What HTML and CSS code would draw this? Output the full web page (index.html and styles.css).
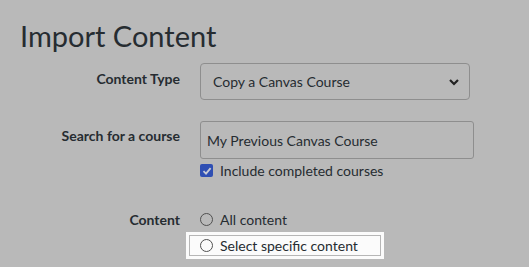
FILE: index.html
```html
<!DOCTYPE html>
<html>
<head>
<meta charset="utf-8">
<link rel="stylesheet" href="styles.css">
</head>
<body>
<div class="page">
  <h1 class="title">Import Content</h1>
  <div class="row row-type">
    <div class="label">Content Type</div>
    <div class="field">
      <div class="select">
        <span>Copy a Canvas Course</span>
        <svg class="chev" width="12" height="8" viewBox="0 0 12 8"><path d="M2 2 L6 6 L10 2" fill="none" stroke="#222" stroke-width="2.2"/></svg>
      </div>
    </div>
  </div>
  <div class="row row-search">
    <div class="label">Search for a course</div>
    <div class="field">
      <div class="input">My Previous Canvas Course</div>
      <div class="check-line">
        <span class="checkbox"><svg width="12" height="12" viewBox="0 0 12 12"><path d="M2.5 6.2 L5 8.6 L9.6 3.2" fill="none" stroke="#c8cbd6" stroke-width="1.8"/></svg></span>
        <span>Include completed courses</span>
      </div>
    </div>
  </div>
  <div class="row row-content">
    <div class="label">Content</div>
    <div class="field">
      <div class="radio-line"><span class="radio"></span><span>All content</span></div>
      <div class="highlight">
        <div class="highlight-inner"><span class="radio"></span><span>Select specific content</span></div>
      </div>
    </div>
  </div>
</div>
</body>
</html>
```
FILE: styles.css
```css
html, body {
  margin: 0;
  padding: 0;
  background: #b9b9b9;
  font-family: Lato, "Open Sans", sans-serif;
  color: #262c31;
}
.page {
  width: 529px;
  height: 267px;
  overflow: hidden;
}
.title {
  margin: 0;
  padding: 17px 0 0 20px;
  font-size: 29px;
  font-weight: 400;
  line-height: 38px;
  height: 46px;
}
.row {
  display: flex;
  gap: 20px;
}
.label {
  width: 180px;
  text-align: right;
  font-weight: 700;
  font-size: 14px;
  flex-shrink: 0;
}
.row-type .label { padding-top: 7px; }
.select {
  height: 35px;
  border: 1px solid #8e8e8e;
  border-radius: 4px;
  display: flex;
  align-items: center;
  justify-content: space-between;
  padding: 0 9px 0 12px;
  width: 247px;
  font-size: 14px;
}
.chev { margin-top: 1px; }
.row-search { margin-top: 21px; }
.row-search .label { padding-top: 6px; }
.input {
  width: 266px;
  height: 36px;
  border: 1px solid #8e8e8e;
  border-radius: 3px;
  padding-left: 6px;
  display: flex;
  align-items: center;
  font-size: 14px;
}
.check-line {
  display: flex;
  align-items: center;
  gap: 7px;
  margin-top: 4px;
  font-size: 14px;
  height: 15px;
}
.checkbox {
  width: 13px;
  height: 13px;
  background: #2f4fb3;
  border-radius: 2px;
  display: flex;
  align-items: center;
  justify-content: center;
}
.row-content { margin-top: 33px; }
.row-content .label { line-height: 17px; }
.radio-line {
  display: flex;
  align-items: center;
  gap: 7px;
  font-size: 14px;
  height: 17px;
}
.radio {
  width: 11px;
  height: 11px;
  border: 1px solid #505050;
  border-radius: 50%;
  flex-shrink: 0;
}
.highlight {
  margin-top: 4px;
  margin-left: -14px;
  width: 192px;
  padding: 3px;
  background: #fbfbfb;
}
.highlight-inner {
  border: 1px solid #b6b6b6;
  height: 19px;
  display: flex;
  align-items: center;
  gap: 7px;
  padding-left: 10px;
  font-size: 14px;
}
```
